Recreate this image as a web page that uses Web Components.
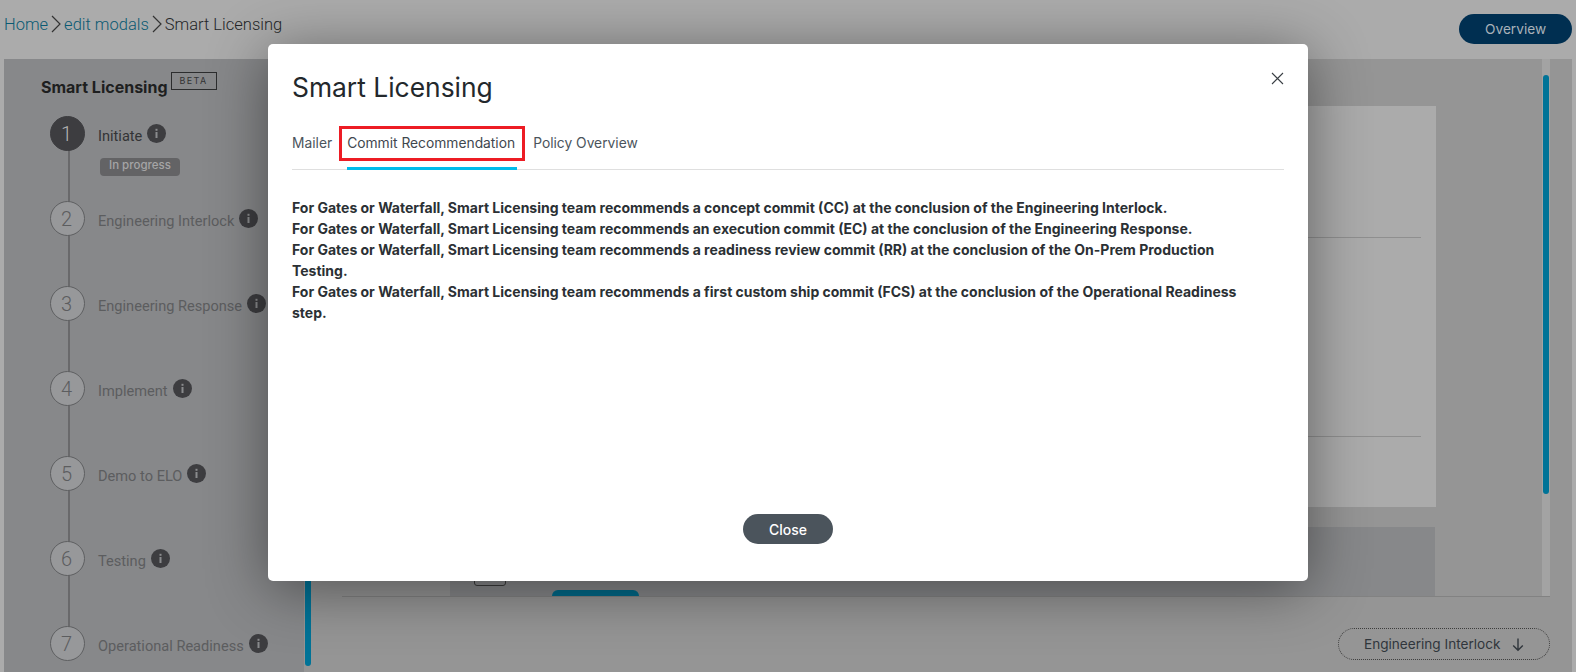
<!DOCTYPE html>
<html>
<head>
<meta charset="utf-8">
<title>Smart Licensing</title>
<style>
  html, body { margin: 0; padding: 0; height: 100%; overflow: hidden; }
  body { font-family: Roboto, "Liberation Sans", sans-serif; background: #ababab; }
</style>
</head>
<body>
<sl-page></sl-page>

<script>
// small helper so each element gets an open shadow root from a string
class Base extends HTMLElement {
  render(html) {
    this.shadow = this.attachShadow({ mode: 'open' });
    this.shadow.innerHTML = html;
  }
}

const infoIcon = `<svg width="19" height="19" viewBox="0 0 19 19"><circle cx="9.5" cy="9.5" r="9.5" fill="#3d3d40"/><rect x="8.5" y="8" width="2" height="6" fill="#8a8b8d"/><rect x="8.5" y="4.8" width="2" height="2" fill="#8a8b8d"/></svg>`;

class SlBreadcrumb extends Base {
  connectedCallback() {
    const chev = `<svg width="12" height="20" viewBox="0 0 12 20"><path d="M2 2 L10 10 L2 18" fill="none" stroke="#333" stroke-width="1.2"/></svg>`;
    this.render(`<style>
      :host { display: flex; align-items: center; font: 300 16.5px Roboto, sans-serif; color: #232628; }
      a { color: #0a5a73; }
      svg { margin: 0 2px 0 2px; }
    </style><a>Home</a>${chev}<a>edit modals</a>${chev}<span>Smart Licensing</span>`);
  }
}
customElements.define('sl-breadcrumb', SlBreadcrumb);

class SlStep extends Base {
  connectedCallback() {
    const n = this.getAttribute('n');
    const active = this.hasAttribute('active');
    const last = this.hasAttribute('last');
    this.render(`<style>
      :host { display: flex; height: 85px; position: relative; font-family: Roboto, sans-serif; }
      .num { box-sizing: border-box; flex: none; width: 35px; height: 35px; border-radius: 50%; z-index: 1;
        display: flex; align-items: center; justify-content: center; font-size: 20px; font-weight: 300;
        border: 1px solid #5e5f61; background: #97989a; color: #5c5d5f; padding-right: 2px; }
      .active { background: #3d3d40; border-color: #3d3d40; color: #b5b5b5; }
      .line { position: absolute; left: 18px; top: 34px; bottom: -1px; width: 2px; background: #69696b; }
      .body { margin-left: 13px; padding-top: 10px; }
      .row { display: flex; align-items: flex-start; font-size: 14.6px; line-height: 21px; color: ${active ? '#333436' : '#5c5d5f'}; }
      .row svg { margin: -2px 0 0 5px; }
      .badge { display: inline-block; margin: 11px 0 0 2px; padding: 0 9px; height: 18px; line-height: 18px; border-radius: 4px;
        background: #636365; color: #a5a5a5; font: 500 11.5px Inter, sans-serif; }
    </style>
    <div class="num ${active ? 'active' : ''}">${n}</div>
    ${last ? '' : '<div class="line"></div>'}
    <div class="body"><div class="row"><slot></slot>${infoIcon}</div>
    ${active ? '<span class="badge">In progress</span>' : ''}</div>`);
  }
}
customElements.define('sl-step', SlStep);

class SlSidebar extends Base {
  connectedCallback() {
    this.render(`<style>
      :host { box-sizing: border-box; display: block; flex: none; width: 300px; height: 100%; background: #87888a; padding: 13px 0 0 37px; overflow: hidden; }
      .head { display: flex; align-items: flex-start; height: 44px; }
      h2 { margin: 5px 0 0; font: 700 16px/20px Inter, sans-serif; color: #1e1f20; }
      .beta { box-sizing: border-box; margin-left: 3px; width: 46px; height: 18px; border: 1px solid #2c2d2e; text-align: center;
        font: 400 9px/16px Inter, sans-serif; letter-spacing: 1.4px; color: #333; }
      .steps { margin-left: 9px; }
    </style>
    <div class="head"><h2>Smart Licensing</h2><div class="beta">BETA</div></div>
    <div class="steps"><slot></slot></div>`);
  }
}
customElements.define('sl-sidebar', SlSidebar);

// the form behind the modal, only its edges are visible
class SlContent extends Base {
  connectedCallback() {
    this.render(`<style>
      :host { display: flex; flex-direction: column; flex: 1; min-width: 0; position: relative; }
      .scroll { flex: none; height: 537px; display: flex; border-bottom: 1px solid #828282; margin-left: 31px; margin-right: 22px; }
      .cards { flex: 1; padding-top: 47px; }
      .light { margin-left: 108px; height: 401px; background: #ababab; box-sizing: border-box; padding: 131px 15px 0 0; }
      .rule { height: 1px; background: #8f8f8f; margin-bottom: 198px; }
      .dark { position: relative; margin: 20px 1px 0 108px; height: 69px; background: #87888a; }
      .check { position: absolute; left: 24px; top: 30px; width: 32px; height: 29px; box-sizing: border-box; border: 1px solid #3b3b3b; border-radius: 3px; }
      .teal { position: absolute; left: 102px; bottom: 0; width: 87px; height: 6px; background: #006a8a; border-radius: 20px 20px 0 0; }
      .track { flex: none; margin-left: 106px; width: 8px; background: #a3a3a3; padding-top: 16px; box-sizing: border-box; height: 100%; }
      .thumb { width: 6px; margin-left: 1px; height: 419px; border-radius: 3px; background: #007397; }
      .foot { display: flex; justify-content: flex-end; padding: 31px 22px 0 0; }
      .next { box-sizing: border-box; display: flex; align-items: center; width: 212px; height: 32px; padding-left: 25px;
        border: 1px dotted #3c3c3c; border-radius: 16px; font: 400 13.6px Inter, sans-serif; color: #30363c; }
      .next svg { margin-left: 11px; }
    </style>
    <div class="scroll">
      <div class="cards">
        <div class="light"><div class="rule"></div><div class="rule"></div></div>
        <div class="dark"><div class="check"></div><div class="teal"></div></div>
      </div>
      <div class="track"><div class="thumb"></div></div>
    </div>
    <div class="foot"><div class="next">Engineering Interlock
      <svg width="14" height="16" viewBox="0 0 14 16"><path d="M7 2.5 V14 M2.2 9.5 L7 14.3 L11.8 9.5" fill="none" stroke="#30363c" stroke-width="1.4"/></svg>
    </div></div>`);
  }
}
customElements.define('sl-content', SlContent);

class SlTabs extends Base {
  connectedCallback() {
    this.render(`<style>
      :host { display: flex; border-bottom: 1px solid #dfdfdf; height: 42px; font: 400 13.8px Inter, sans-serif; color: #4b545c; position: relative; }
      div { box-sizing: border-box; height: 43px; padding-top: 6px; line-height: 21px; margin-right: 16px; }
      .mailer { margin-right: 15px; }
      .on { border-bottom: 3px solid #00bceb; color: #3f474e; position: relative; width: 170px; margin-right: 16px; }
      .on::before { content: ''; position: absolute; left: -8px; right: -8px; top: -1px; height: 35px; box-sizing: border-box; border: 3px solid #ed1c24; }
    </style>
    <div class="mailer">Mailer</div><div class="on">Commit Recommendation</div><div>Policy Overview</div>`);
  }
}
customElements.define('sl-tabs', SlTabs);

class SlModal extends Base {
  connectedCallback() {
    this.render(`<style>
      :host { position: absolute; left: 268px; top: 44px; width: 1040px; height: 537px; box-sizing: border-box; padding: 23px 24px 0;
        display: flex; flex-direction: column; background: #fff; border-radius: 5px; box-shadow: 0 8px 60px rgba(0,0,0,.45); font-family: Inter, sans-serif; }
      h1 { margin: 0; font: 400 26.4px/40px Inter, sans-serif; color: #23282c; height: 60px; }
      .x { position: absolute; right: 24px; top: 28px; }
      .text { flex: 1; padding: 27px 30px 0 0; font-size: 14px; font-weight: 700; line-height: 21px; color: #2b3034; }
      .text ::slotted(p) { margin: 0; }
      .actions { display: flex; justify-content: center; padding-bottom: 37px; }
      button { width: 90px; height: 30px; border: 0; border-radius: 15px; background: #4b545c; color: #fff; font: 500 14px Inter, sans-serif; padding: 0; }
    </style>
    <h1>Smart Licensing</h1>
    <svg class="x" width="13" height="13" viewBox="0 0 13 13"><path d="M1 1 L12 12 M12 1 L1 12" stroke="#3a3f44" stroke-width="1.1" fill="none"/></svg>
    <sl-tabs></sl-tabs>
    <div class="text"><slot></slot></div>
    <div class="actions"><button>Close</button></div>`);
  }
}
customElements.define('sl-modal', SlModal);

class SlPage extends Base {
  connectedCallback() {
    this.render(`<style>
      :host { display: block; height: 672px; position: relative; overflow: hidden; background: #ababab; }
      header { box-sizing: border-box; display: flex; align-items: flex-start; justify-content: space-between; height: 59px; padding: 14px 4px 0 4px; }
      sl-breadcrumb { margin-top: -1px; height: 22px; }
      .overview { box-sizing: border-box; width: 113px; height: 30px; border-radius: 15px; background: #002f51; color: #a9b2b9;
        font: 400 13.7px/30px Inter, sans-serif; padding-left: 26px; }
      .panel { display: flex; height: 613px; margin: 0 4px; background: #959595; }
      .bar { flex: none; width: 6px; height: 607px; margin-left: 1px; background: #007397; border-radius: 0 0 3px 3px; }
      p { margin: 0; }
    </style>
    <header><sl-breadcrumb></sl-breadcrumb><div class="overview">Overview</div></header>
    <div class="panel">
      <sl-sidebar>
        <sl-step n="1" active>Initiate</sl-step>
        <sl-step n="2">Engineering Interlock</sl-step>
        <sl-step n="3">Engineering Response</sl-step>
        <sl-step n="4">Implement</sl-step>
        <sl-step n="5">Demo to ELO</sl-step>
        <sl-step n="6">Testing</sl-step>
        <sl-step n="7" last>Operational Readiness</sl-step>
      </sl-sidebar>
      <div class="bar"></div>
      <sl-content></sl-content>
    </div>
    <sl-modal>
      <p>For Gates or Waterfall, Smart Licensing team recommends a concept commit (CC) at the conclusion of the Engineering Interlock.</p>
      <p>For Gates or Waterfall, Smart Licensing team recommends an execution commit (EC) at the conclusion of the Engineering Response.</p>
      <p>For Gates or Waterfall, Smart Licensing team recommends a readiness review commit (RR) at the conclusion of the On-Prem Production Testing.</p>
      <p>For Gates or Waterfall, Smart Licensing team recommends a first custom ship commit (FCS) at the conclusion of the Operational Readiness step.</p>
    </sl-modal>`);
  }
}
customElements.define('sl-page', SlPage);
</script>
</body>
</html>
